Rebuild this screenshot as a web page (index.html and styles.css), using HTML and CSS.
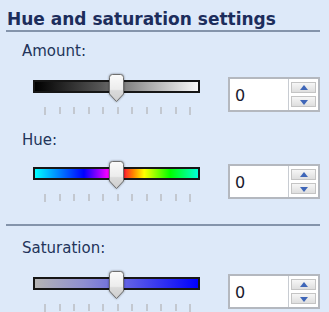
FILE: index.html
```html
<!DOCTYPE html>
<html lang="en">
<head>
  <meta charset="UTF-8" />
  <title>Hue and saturation settings</title>
  <link rel="stylesheet" href="styles.css">
</head>
<body>
  <div class="panel">
    <h2>Hue and saturation settings</h2>

    <div class="group">
      <label>Amount:</label>
      <div class="row">
        <div class="slider">
          <div class="track amount"></div>
          <svg class="thumb" style="left: 75px" width="17" height="30" viewBox="0 0 17 30">
            <defs>
              <linearGradient id="tg1" x1="0" y1="0" x2="0" y2="1">
                <stop offset="0" stop-color="#fbfbfb"/>
                <stop offset="0.55" stop-color="#ececec"/>
                <stop offset="0.6" stop-color="#dadada"/>
                <stop offset="1" stop-color="#cfcfcf"/>
              </linearGradient>
            </defs>
            <path d="M1.5 4.5 Q1.5 1.5 4.5 1.5 H12.5 Q15.5 1.5 15.5 4.5 V21 L8.5 28.5 L1.5 21 Z" fill="url(#tg1)" stroke="#6f6f6f"/>
          </svg>
          <div class="ticks"><i></i><i></i><i></i><i></i><i></i><i></i><i></i><i></i><i></i><i></i><i></i></div>
        </div>
        <div class="spin">
          <span class="value">0</span>
          <div class="buttons">
            <span class="btn up"></span>
            <span class="btn down"></span>
          </div>
        </div>
      </div>
    </div>

    <div class="group">
      <label class="hue-label">Hue:</label>
      <div class="row">
        <div class="slider">
          <div class="track hue"></div>
          <svg class="thumb" style="left: 75px" width="17" height="30" viewBox="0 0 17 30">
            <path d="M1.5 4.5 Q1.5 1.5 4.5 1.5 H12.5 Q15.5 1.5 15.5 4.5 V21 L8.5 28.5 L1.5 21 Z" fill="url(#tg1)" stroke="#6f6f6f"/>
          </svg>
          <div class="ticks"><i></i><i></i><i></i><i></i><i></i><i></i><i></i><i></i><i></i><i></i><i></i></div>
        </div>
        <div class="spin">
          <span class="value">0</span>
          <div class="buttons">
            <span class="btn up"></span>
            <span class="btn down"></span>
          </div>
        </div>
      </div>
    </div>

    <hr class="sep">

    <div class="group last">
      <label>Saturation:</label>
      <div class="row">
        <div class="slider">
          <div class="track saturation"></div>
          <svg class="thumb" style="left: 75px" width="17" height="30" viewBox="0 0 17 30">
            <path d="M1.5 4.5 Q1.5 1.5 4.5 1.5 H12.5 Q15.5 1.5 15.5 4.5 V21 L8.5 28.5 L1.5 21 Z" fill="url(#tg1)" stroke="#6f6f6f"/>
          </svg>
          <div class="ticks"><i></i><i></i><i></i><i></i><i></i><i></i><i></i><i></i><i></i><i></i><i></i></div>
        </div>
        <div class="spin">
          <span class="value">0</span>
          <div class="buttons">
            <span class="btn up"></span>
            <span class="btn down"></span>
          </div>
        </div>
      </div>
    </div>
  </div>
</body>
</html>
```

FILE: styles.css
```css
:root {
  --panel-bg: #dde9f9;
  --title-color: #1c2d5c;
  --label-color: #22345a;
  --rule-color: #8494ab;
}

* {
  margin: 0;
  padding: 0;
  box-sizing: border-box;
}

body {
  background-color: var(--panel-bg);
  font-family: 'DejaVu Sans', Verdana, sans-serif;
  overflow: hidden;
}

.panel {
  width: 329px;
  height: 312px;
  padding: 9px 0 0 6px;
}

h2 {
  width: 314px;
  padding: 0 0 1px 1px;
  font-size: 17px;
  line-height: 20px;
  font-weight: bold;
  color: var(--title-color);
  border-bottom: 2px solid var(--rule-color);
}

.group {
  margin-top: 10px;
  padding-left: 16px;
}

.group + .group {
  margin-top: 16px;
}

label {
  display: block;
  font-size: 15px;
  line-height: 19px;
  color: var(--label-color);
  margin-bottom: 12px;
}

.hue-label {
  margin-bottom: 10px;
}

.row {
  display: flex;
  align-items: flex-start;
  padding-left: 11px;
}

.slider {
  position: relative;
  width: 167px;
  padding-top: 7px;
}

.track {
  height: 13px;
  border: 2px solid #161616;
}

.track.amount {
  background: linear-gradient(to right, #000 0%, #555 40%, #aaa 70%, #fafafa 100%);
}

.track.hue {
  background: linear-gradient(to right, #00ffff 0%, #0000ff 30%, #ff00ff 45%, #ff0040 53%, #ff8000 60%, #ffff00 67%, #00ff00 83%, #00ffd8 100%);
}

.track.saturation {
  background: linear-gradient(to right, #b4b4b4 0%, #8f8fd0 30%, #5a5ae6 60%, #0000ff 100%);
}

.thumb {
  position: absolute;
  top: 0;
  filter: drop-shadow(0 0 1px rgba(0, 0, 0, 0.45));
}

.ticks {
  display: flex;
  justify-content: space-between;
  width: 147px;
  margin: 14px 0 0 11px;
}

.ticks i {
  display: block;
  width: 2px;
  height: 7px;
  background-color: #c3c8d0;
}

.ticks i:first-child,
.ticks i:last-child {
  height: 8px;
}

.spin {
  display: flex;
  width: 92px;
  height: 35px;
  margin: 4px 0 0 28px;
  background-color: #fff;
  border: 2px solid #b4b8bf;
}

.value {
  flex: 1;
  padding: 8px 0 0 5px;
  font-size: 16px;
  line-height: 18px;
  color: #1a1a2e;
}

.buttons {
  display: flex;
  flex-direction: column;
  gap: 3px;
  width: 30px;
  padding: 3px 2px 3px 2px;
  border-left: 1px solid #c8ccd2;
}

.btn {
  position: relative;
  flex: 1;
  background: linear-gradient(to bottom, #f6f6f6, #dedede);
  border: 1px solid #c4c4c4;
}

.btn::after {
  content: '';
  position: absolute;
  left: 50%;
  top: 50%;
  margin-left: -4px;
  border-left: 4px solid transparent;
  border-right: 4px solid transparent;
}

.btn.up::after {
  margin-top: -3px;
  border-bottom: 5px solid #3f66b8;
}

.btn.down::after {
  margin-top: -2px;
  border-top: 5px solid #3f66b8;
}

.sep {
  width: 314px;
  margin-top: 22px;
  border: 0;
  border-top: 2px solid var(--rule-color);
}

.group.last {
  margin-top: 13px;
}
```
